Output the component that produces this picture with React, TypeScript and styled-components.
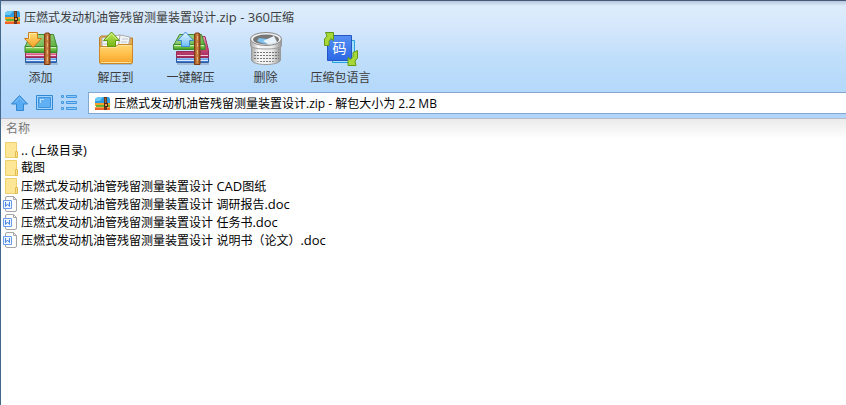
import React from "react";
import styled, { createGlobalStyle } from "styled-components";

const GlobalStyle = createGlobalStyle`
  * { box-sizing: border-box; }
  html, body, #root { height: 100%; }
  body {
    margin: 0;
    overflow: hidden;
    background: #fff;
    font: 12px/18px "Open Sans", "Noto Sans CJK SC", sans-serif;
    color: #000;
  }
`;

const Window = styled.main`
  display: flex;
  flex-direction: column;
  min-height: 100%;
  border-left: 1px solid #44678c;
`;

const Chrome = styled.header`
  border-top: 1px solid #46597a;
  border-bottom: 1px solid #b9bcc4;
  padding-bottom: 4px;
  background:
    linear-gradient(rgba(120, 135, 165, 0.4), rgba(160, 180, 210, 0) 5px),
    linear-gradient(#dfeefc, #d3e6fb 25%, #bfdefa 50%, #b5d9fb 75%, #b1d5fb);
`;

const TitleBar = styled.div`
  display: flex;
  align-items: center;
  gap: 3px;
  height: 30px;
  padding: 2px 3px 0;
`;

const Title = styled.h1`
  margin: 0;
  font-size: 12px;
  font-weight: 400;
  color: #3c3c3c;
`;

const Latin = styled.span`
  font-size: 13px;
`;

const Toolbar = styled.div`
  display: flex;
  padding-left: 2px;
`;

const ToolButton = styled.button`
  display: flex;
  flex-direction: column;
  align-items: center;
  gap: 2px;
  width: 75px;
  height: 57px;
  padding: 0;
  border: 0;
  background: none;
  font: inherit;
  color: #3c3c3c;
  white-space: nowrap;
`;

const AddressRow = styled.div`
  display: flex;
  align-items: center;
  padding: 4px 0 0 10px;
`;

const NavButton = styled.button`
  display: flex;
  width: 25px;
  padding: 0;
  border: 0;
  background: none;
`;

const AddressBox = styled.label`
  display: flex;
  flex: 1;
  align-items: center;
  gap: 3px;
  height: 22px;
  margin-left: 2px;
  padding-left: 5px;
  border: 1px solid #84a7d0;
  border-right: 0;
  background: #fff;
`;

const AddressInput = styled.input`
  flex: 1;
  min-width: 0;
  height: 20px;
  padding: 0;
  border: 0;
  outline: 0;
  background: none;
  font: inherit;
  color: #000;
`;

const FileTable = styled.table`
  width: 100%;
  border-collapse: collapse;
`;

const HeadCell = styled.th`
  height: 22px;
  padding: 0 5px 2px;
  background: linear-gradient(#ebebeb, #fff 20px);
  font-weight: 400;
  text-align: left;
  color: #777;
`;

const FileCell = styled.td`
  height: 18px;
  padding: 0 0 0 2px;
`;

const FileName = styled.div`
  display: flex;
  align-items: center;
  gap: 2px;
  height: 18px;
  white-space: pre;
`;

const ArchiveIcon = () => (
  <svg width="17" height="16" viewBox="0 0 17 16" aria-hidden="true">
    <path d="M1 4 4 2h11l1 2v5H1z" fill="#2f9de2" />
    <path d="M1 4 4 2h5L6 6H1z" fill="#6bcaf5" />
    <path d="M1 8h15v3H1z" fill="#f6a02c" />
    <path d="M2 10h14v3H2z" fill="#62b53a" />
    <path d="M1 12h15v3H1z" fill="#f0642a" />
    <path d="M1 12h15v1H1z" fill="#f9a04a" />
    <path d="M10 2h3v13h-3z" fill="#6b3a1c" />
    <path d="M11 3h1v5h-1z" fill="#a46637" />
    <path d="M10 8h4v4h-4z" fill="#4b2817" />
    <path d="M11 9h2v2h-2z" fill="#e5a145" />
  </svg>
);

const Gradients = ({ id }: { id: string }) => (
  <defs>
    <linearGradient id={`${id}-top`} x2="1" y2="1">
      <stop stopColor="#b9de98" /><stop offset="1" stopColor="#58ad3b" />
    </linearGradient>
    <linearGradient id={`${id}-green`} x2="0" y2="1">
      <stop stopColor="#b4e27f" /><stop offset=".5" stopColor="#6dc044" /><stop offset="1" stopColor="#3a9427" />
    </linearGradient>
    <linearGradient id={`${id}-red`} x2="0" y2="1">
      <stop stopColor="#f2a3bd" /><stop offset=".5" stopColor="#d2507f" /><stop offset="1" stopColor="#a02a5a" />
    </linearGradient>
    <linearGradient id={`${id}-blue`} x2="0" y2="1">
      <stop stopColor="#b4d8fb" /><stop offset=".5" stopColor="#5c98ea" /><stop offset="1" stopColor="#2b60b8" />
    </linearGradient>
    <linearGradient id={`${id}-strap`}>
      <stop stopColor="#94491c" /><stop offset=".5" stopColor="#d48c4c" /><stop offset="1" stopColor="#8e4519" />
    </linearGradient>
    <linearGradient id={`${id}-arrow`} x2="0" y2="1">
      <stop stopColor="#ffdc78" /><stop offset="1" stopColor="#f9a126" />
    </linearGradient>
    <linearGradient id={`${id}-sky`} x2="0" y2="1">
      <stop stopColor="#e8f7ff" /><stop offset="1" stopColor="#6dbcf8" />
    </linearGradient>
  </defs>
);

const Strap = ({ id }: { id: string }) => (
  <>
    <path d="M21.500 3.500l1-1.500h3.500l1 1.500V33.500h-5.500z" fill={`url(#${id}-strap)`} stroke="#7f3d14" />
    <path d="M24.500 5v26" stroke="#eab276" strokeDasharray="4 3" />
  </>
);

const AddIcon = () => (
  <svg width="36" height="36" viewBox="0 0 36 36" aria-hidden="true">
    <Gradients id="add" />
    <path d="M2 33h33" stroke="#5e6d83" strokeOpacity=".3" strokeWidth="2" />
    <path d="M2.500 26.500h31v5h-31z" fill="url(#add-blue)" stroke="#2c5ba6" />
    <path d="M3 29.500h30" stroke="#dcebfd" />
    <path d="M2.500 21.500h31v5h-31z" fill="url(#add-red)" stroke="#942a55" />
    <path d="M3 24.500h30" stroke="#f6c9d9" />
    <path d="M7.500 3.500h23L34 16H2z" fill="url(#add-top)" stroke="#3d8a2c" />
    <path d="M2 15.500h32v6H2z" fill="url(#add-green)" stroke="#3a8a28" />
    <path d="M3 16.500h30" stroke="#d3efb9" />
    <Strap id="add" />
    <path d="M5.500 1.500h9v6h4L10 16.500 1.500 7.500h4z" fill="url(#add-arrow)" stroke="#cd7d1c" />
    <path d="M6.500 8V2.500h7" fill="none" stroke="#ffeaa8" />
  </svg>
);

const ExtractIcon = () => (
  <svg width="36" height="36" viewBox="0 0 36 36" aria-hidden="true">
    <defs>
      <linearGradient id="folder" x2="0" y2="1">
        <stop stopColor="#ffd776" /><stop offset=".5" stopColor="#ffc04a" /><stop offset="1" stopColor="#f6a22a" />
      </linearGradient>
      <linearGradient id="up-green" x2="0" y2="1">
        <stop stopColor="#c0e85c" /><stop offset="1" stopColor="#74b612" />
      </linearGradient>
    </defs>
    <path d="M2 33h32" stroke="#5e6d83" strokeOpacity=".3" strokeWidth="2" />
    <path d="M1.500 31V6.500L3 5h9l3 2h19.500v24z" fill="#e3aa50" stroke="#b87c2c" />
    <path d="m4 7 7-1 3 10H4z" fill="#f8fafc" stroke="#aaa" />
    <path d="m14 5 8-1 4 14H12z" fill="#fff" stroke="#aaa" />
    <path d="m22 4 10 2-2 12H20z" fill="#f2f5f8" stroke="#aaa" />
    <path d="M24 8h6m-7 3h6M5 10h3m-3 3h4" stroke="#bcc5cd" />
    <path d="M1.500 15.500h16l3-2h14V31q0 1.500-1.500 1.500H3Q1.500 32.500 1.500 31z" fill="url(#folder)" stroke="#cd8726" />
    <path d="M3 16.500h15l3-2h12M3 31.500h30" fill="none" stroke="#ffe29a" />
    <path d="M9.500 15.500v-6h-4L13.500 1l8 8.500h-4v6z" fill="url(#up-green)" stroke="#62990f" />
    <path d="m8 8.500 5.500-6 5.500 6" fill="none" stroke="#dcf598" />
  </svg>
);

const QuickExtractIcon = () => (
  <svg width="36" height="36" viewBox="0 0 36 36" aria-hidden="true">
    <Gradients id="quick" />
    <path d="M4 33h32" stroke="#5e6d83" strokeOpacity=".3" strokeWidth="2" />
    <path d="M3.500 26.500h32v5h-32z" fill="url(#quick-blue)" stroke="#2c5ba6" />
    <path d="M4 29.500h31" stroke="#dcebfd" />
    <path d="m28 6 4-.500 3.500 14v7h-32v-6H28z" fill="url(#quick-red)" stroke="#942a55" />
    <path d="M4 24.500h31" stroke="#f6c9d9" />
    <path d="M6.500 3.500h22l3.500 11H.500z" fill="url(#quick-top)" stroke="#3d8a2c" />
    <path d="M.500 13.500H32v5H.500z" fill="url(#quick-green)" stroke="#3a8a28" />
    <path d="M1 14.500h30" stroke="#d3efb9" />
    <Strap id="quick" />
    <path d="M8.500 15.500v-6h-4L12.500 1l8 8.500h-4v6z" fill="url(#quick-sky)" stroke="#3f8cd6" />
  </svg>
);

const DeleteIcon = () => (
  <svg width="36" height="36" viewBox="0 0 36 36" aria-hidden="true">
    <defs>
      <linearGradient id="basket">
        <stop stopColor="#a5a5a5" /><stop offset=".25" stopColor="#fafafa" /><stop offset=".7" stopColor="#ededed" /><stop offset="1" stopColor="#939393" />
      </linearGradient>
      <pattern id="holes" width="3" height="3" patternUnits="userSpaceOnUse">
        <path d="M0 0h2v1H0z" fill="#777" />
      </pattern>
    </defs>
    <path d="M3.500 14v15c1 6 28 6 29 0V14z" fill="url(#basket)" stroke="#999" />
    <path d="M5 18c5 3 21 3 26 0v11c-5 3-21 3-26 0z" fill="url(#holes)" />
    <path d="M2.500 8v7c2 4 29 4 31 0V8z" fill="url(#basket)" stroke="#9b9b9b" />
    <ellipse cx="18" cy="8" rx="15.500" ry="6.500" fill="#f3f3f3" stroke="#888" />
    <ellipse cx="18" cy="8.500" rx="13" ry="5" fill="#777" />
    <path d="m9 10 2-3 8 1 2 5c-5 0-9-1-12-3z" fill="#7cc0ec" />
    <path d="m15 10 11-5 3 6c-2 2-6 2-9 2z" fill="#e8f3fb" />
  </svg>
);

const LanguageIcon = () => (
  <svg width="36" height="36" viewBox="0 0 36 36" aria-hidden="true">
    <defs>
      <linearGradient id="tile" x2="0" y2="1">
        <stop stopColor="#5790f2" /><stop offset="1" stopColor="#2a68e6" />
      </linearGradient>
    </defs>
    <path d="M9.500 9.500h22v22h-22z" fill="#a4e1fc" stroke="#2ba0e0" />
    <path d="M4.500 4.500h24v25h-24z" fill="url(#tile)" stroke="#2457c4" />
    <text x="16.500" y="22" textAnchor="middle" fill="#fff" fontSize="14" fontFamily="Noto Sans CJK SC">码</text>
    <path d="M1.500 14.500V8L4 5 2.500 1.500h8v8L8 7.500l-2 3v4z" fill="#a8d838" stroke="#629a18" />
    <path d="M34.500 19.500V27L32 30l1 4.500h-8v-8l2.500 2 2.500-3v-4z" fill="#a8d838" stroke="#629a18" />
  </svg>
);

const UpIcon = () => (
  <svg width="18" height="18" viewBox="0 0 18 18" aria-hidden="true">
    <path d="M8.500 1.500 16.500 10h-4v6.500h-7V10H.500z" fill="#55aaf3" stroke="#3486d0" strokeLinejoin="round" />
    <path d="m4 8.500 4.500-5 4.500 5" fill="none" stroke="#84c3fa" />
  </svg>
);

const PreviewIcon = () => (
  <svg width="18" height="18" viewBox="0 0 18 18" aria-hidden="true">
    <path d="M.500 1.500h16v14H.500z" fill="#a2d3fc" stroke="#3188d2" />
    <path d="M2.500 3.500h12v10h-12z" fill="#62b0f4" stroke="#3f94dd" />
    <path d="M4 5h4v1H5v3H4z" fill="#b8defd" />
  </svg>
);

const ListIcon = () => (
  <svg width="18" height="18" viewBox="0 0 18 18" aria-hidden="true">
    <g fill="#8fc9fa" stroke="#4498e0">
      <path d="M.500 1.500h2v2h-2zM.500 7.500h2v2h-2zM.500 13.500h2v2h-2z" />
      <path d="M5.500 1.500h10v2h-10zM5.500 7.500h10v2h-10zM5.500 13.500h10v2h-10z" />
    </g>
  </svg>
);

const FolderIcon = () => (
  <svg width="16" height="18" viewBox="0 0 16 18" aria-hidden="true">
    <path d="M2.500 1.500h11v15h-11z" fill="#fde696" stroke="#edcf6c" />
    <path d="M12.500 10.500h2v6h-2z" fill="#fbe08a" stroke="#e4bd50" />
  </svg>
);

const DocIcon = () => (
  <svg width="16" height="18" viewBox="0 0 16 18" aria-hidden="true">
    <path d="M4 1.500h6.500l3 3V15q0 1.500-1.500 1.500H4Q2.500 16.500 2.500 15V3Q2.500 1.500 4 1.500z" fill="#fff" stroke="#a5a5a5" />
    <path d="M10.500 1.500v3h3" fill="none" stroke="#a5a5a5" />
    <path d="M.500 5.500h8v8h-8z" fill="#eef5ff" stroke="#6a9cee" />
    <path d="M2.500 7v4.500l2-2.500 2 2.500V7" fill="none" stroke="#4a84e4" />
  </svg>
);

const tools = [
  { label: "添加", Icon: AddIcon },
  { label: "解压到", Icon: ExtractIcon },
  { label: "一键解压", Icon: QuickExtractIcon },
  { label: "删除", Icon: DeleteIcon },
  { label: "压缩包语言", Icon: LanguageIcon },
];

const navigation = [
  { label: "上级目录", Icon: UpIcon },
  { label: "预览", Icon: PreviewIcon },
  { label: "列表", Icon: ListIcon },
];

const files = [
  { name: ".. (上级目录)", folder: true },
  { name: "截图", folder: true },
  { name: "压燃式发动机油管残留测量装置设计 CAD图纸", folder: true },
  { name: "压燃式发动机油管残留测量装置设计 调研报告.doc", folder: false },
  { name: "压燃式发动机油管残留测量装置设计 任务书.doc", folder: false },
  { name: "压燃式发动机油管残留测量装置设计 说明书（论文）.doc", folder: false },
];

const MixedText = ({ text }: { text: string }) => (
  <span>
    {text.split(/([\x20-\x7e]+)/).map((part, index) =>
      index % 2 ? <Latin key={index}>{part}</Latin> : part,
    )}
  </span>
);

export default function App() {
  return (
    <>
      <GlobalStyle />
      <Window>
        <Chrome>
          <TitleBar>
            <ArchiveIcon />
            <Title><MixedText text="压燃式发动机油管残留测量装置设计.zip - 360压缩" /></Title>
          </TitleBar>
          <Toolbar>
            {tools.map(({ label, Icon }) => (
              <ToolButton key={label} type="button"><Icon />{label}</ToolButton>
            ))}
          </Toolbar>
          <AddressRow>
            {navigation.map(({ label, Icon }) => (
              <NavButton key={label} type="button" aria-label={label}><Icon /></NavButton>
            ))}
            <AddressBox>
              <ArchiveIcon />
              <AddressInput aria-label="路径" defaultValue="压燃式发动机油管残留测量装置设计.zip - 解包大小为 2.2 MB" />
            </AddressBox>
          </AddressRow>
        </Chrome>
        <FileTable>
          <thead>
            <tr><HeadCell scope="col">名称</HeadCell></tr>
          </thead>
          <tbody>
            {files.map(({ name, folder }) => (
              <tr key={name}>
                <FileCell>
                  <FileName>{folder ? <FolderIcon /> : <DocIcon />}<MixedText text={name} /></FileName>
                </FileCell>
              </tr>
            ))}
          </tbody>
        </FileTable>
      </Window>
    </>
  );
}
